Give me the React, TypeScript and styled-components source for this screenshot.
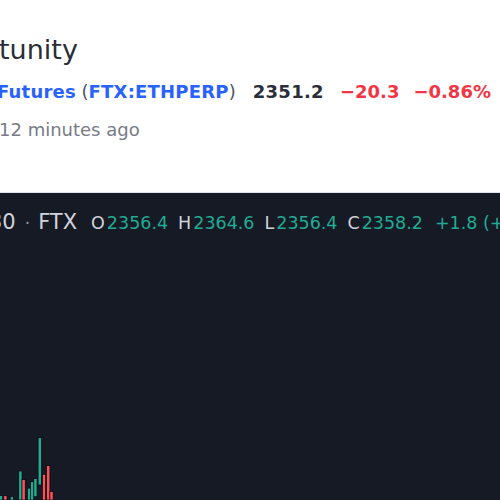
import React from "react";
import styled, { createGlobalStyle } from "styled-components";

const Global = createGlobalStyle`
  html, body { margin: 0; padding: 0; background: #ffffff; overflow: hidden; }
  body { font-family: "DejaVu Sans", "Noto Sans", sans-serif; }
  #root { width: 500px; height: 500px; }
`;

const Page = styled.div`
  width: 500px;
  height: 500px;
  display: flex;
  flex-direction: column;
  overflow: hidden;
`;

const Header = styled.header`
  display: flex;
  flex-direction: column;
  padding-top: 31px;
  height: 162px;
  box-sizing: border-box;
`;

const Title = styled.h1`
  margin: 0 0 0 -1px;
  font-size: 27px;
  line-height: 38px;
  font-weight: 400;
  color: #2a2e39;
  white-space: nowrap;
`;

const SymbolRow = styled.div`
  display: flex;
  align-items: baseline;
  white-space: nowrap;
  margin: 10px 0 0 -3px;
  font-size: 18px;
  line-height: 26px;
`;

const SymbolLink = styled.span`
  color: #2962ff;
  font-weight: 700;
  letter-spacing: 0.2px;
`;

const Paren = styled.span`
  color: #50535e;
  font-weight: 400;
`;

const Value = styled.span<{ $tone?: "dark" | "down"; $gap: number }>`
  margin-left: ${(p) => p.$gap}px;
  font-weight: 700;
  letter-spacing: ${(p) => (p.$tone === "dark" ? "0.3px" : "0")};
  color: ${(p) => (p.$tone === "down" ? "#f23645" : "#2a2e39")};
`;

const Meta = styled.div`
  font-size: 18px;
  line-height: 26px;
  color: #787b86;
  white-space: nowrap;
  margin: 12px 0 0 -1px;
`;

const Chart = styled.section`
  flex: 1;
  display: flex;
  flex-direction: column;
  background: #161a25;
  border-top: 1px solid #e0e3eb;
  margin-top: 30px;
  overflow: hidden;
`;

const Legend = styled.div`
  display: flex;
  align-items: baseline;
  white-space: nowrap;
  padding-top: 16px;
  margin-left: -11px;
  color: #d1d4dc;
  font-size: 17.5px;
  line-height: 26px;
`;

const Interval = styled.span`
  font-size: 21px;
`;

const Dot = styled.span`
  margin: 0 8px 0 9px;
  font-size: 17px;
  color: #9598a1;
`;

const Exchange = styled.span`
  font-size: 21px;
  margin-right: 14px;
`;

const Field = styled.span`
  margin-right: 10px;
  color: #d1d4dc;
`;

const Num = styled.span`
  margin-left: 2px;
  color: #22ab94;
`;

const Plot = styled.svg`
  flex: 1;
  display: block;
  width: 100%;
`;

const candles: { x: number; top: number; bottom: number; up: boolean }[] = [
  { x: 1, top: 497, bottom: 500, up: true },
  { x: 5, top: 497, bottom: 500, up: false },
  { x: 11, top: 498, bottom: 500, up: true },
  { x: 19, top: 474, bottom: 500, up: true },
  { x: 22, top: 482, bottom: 500, up: false },
  { x: 27, top: 490, bottom: 500, up: true },
  { x: 30, top: 484, bottom: 500, up: true },
  { x: 33, top: 481, bottom: 497, up: true },
  { x: 37, top: 443, bottom: 486, up: true },
  { x: 41, top: 477, bottom: 500, up: false },
  { x: 45, top: 469, bottom: 500, up: false },
  { x: 48, top: 493, bottom: 500, up: false },
];

const PLOT_TOP = 254;

export default function App() {
  return (
    <Page>
      <Global />
      <Header>
        <Title>tunity</Title>
        <SymbolRow>
          <SymbolLink>Futures</SymbolLink>
          <Paren>&nbsp;(</Paren>
          <SymbolLink>FTX:ETHPERP</SymbolLink>
          <Paren>)</Paren>
          <Value $tone="dark" $gap={17}>2351.2</Value>
          <Value $tone="down" $gap={16}>−20.3</Value>
          <Value $tone="down" $gap={14}>−0.86%</Value>
        </SymbolRow>
        <Meta>12 minutes ago</Meta>
      </Header>
      <Chart>
        <Legend>
          <Interval>30</Interval>
          <Dot>·</Dot>
          <Exchange>FTX</Exchange>
          <Field>O<Num>2356.4</Num></Field>
          <Field>H<Num>2364.6</Num></Field>
          <Field>L<Num>2356.4</Num></Field>
          <Field>C<Num>2358.2</Num></Field>
          <Field><Num>+1.8 (+0.08%)</Num></Field>
        </Legend>
        <Plot viewBox={`0 ${PLOT_TOP} 500 ${500 - PLOT_TOP}`} preserveAspectRatio="xMinYMax slice">
          {candles.map((c, i) => (
            <rect
              key={i}
              x={c.x - 1.5}
              y={c.top - 1}
              width={3}
              height={c.bottom - c.top + 1}
              fill={c.up ? "#22ab94" : "#f7525f"}
              stroke="#000000"
              strokeWidth={0.6}
            />
          ))}
        </Plot>
      </Chart>
    </Page>
  );
}
